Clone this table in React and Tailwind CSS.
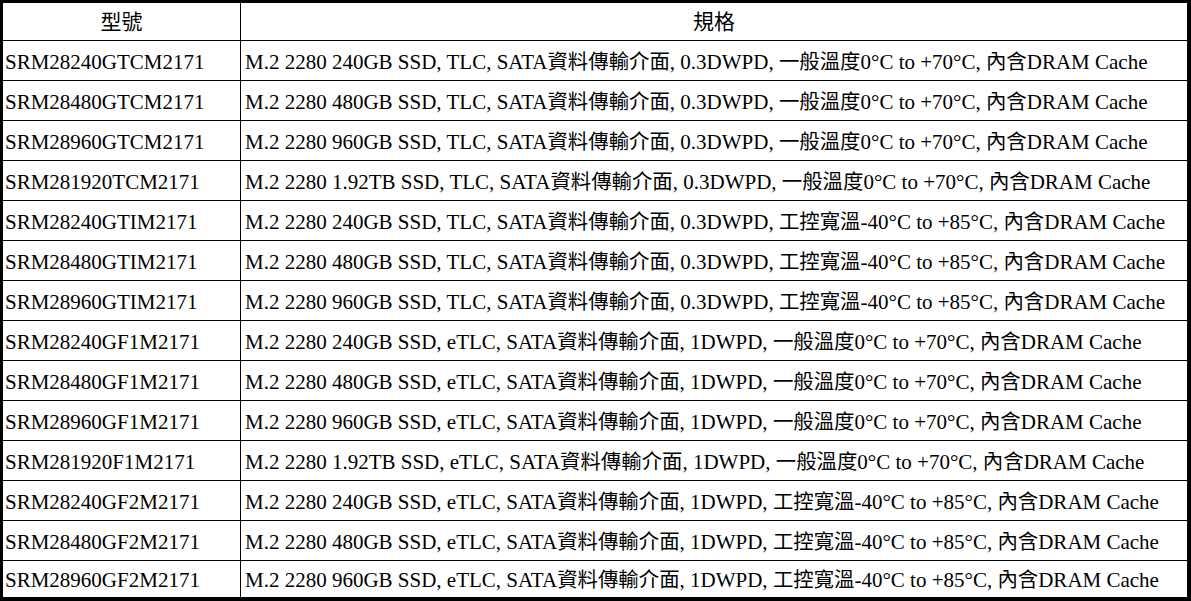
import React from "react";

const rows = [
  ["SRM28240GTCM2171", "M.2 2280 240GB SSD, TLC, SATA資料傳輸介面, 0.3DWPD, 一般溫度0°C to +70°C, 內含DRAM Cache"],
  ["SRM28480GTCM2171", "M.2 2280 480GB SSD, TLC, SATA資料傳輸介面, 0.3DWPD, 一般溫度0°C to +70°C, 內含DRAM Cache"],
  ["SRM28960GTCM2171", "M.2 2280 960GB SSD, TLC, SATA資料傳輸介面, 0.3DWPD, 一般溫度0°C to +70°C, 內含DRAM Cache"],
  ["SRM281920TCM2171", "M.2 2280 1.92TB SSD, TLC, SATA資料傳輸介面, 0.3DWPD, 一般溫度0°C to +70°C, 內含DRAM Cache"],
  ["SRM28240GTIM2171", "M.2 2280 240GB SSD, TLC, SATA資料傳輸介面, 0.3DWPD, 工控寬溫-40°C to +85°C, 內含DRAM Cache"],
  ["SRM28480GTIM2171", "M.2 2280 480GB SSD, TLC, SATA資料傳輸介面, 0.3DWPD, 工控寬溫-40°C to +85°C, 內含DRAM Cache"],
  ["SRM28960GTIM2171", "M.2 2280 960GB SSD, TLC, SATA資料傳輸介面, 0.3DWPD, 工控寬溫-40°C to +85°C, 內含DRAM Cache"],
  ["SRM28240GF1M2171", "M.2 2280 240GB SSD, eTLC, SATA資料傳輸介面, 1DWPD, 一般溫度0°C to +70°C, 內含DRAM Cache"],
  ["SRM28480GF1M2171", "M.2 2280 480GB SSD, eTLC, SATA資料傳輸介面, 1DWPD, 一般溫度0°C to +70°C, 內含DRAM Cache"],
  ["SRM28960GF1M2171", "M.2 2280 960GB SSD, eTLC, SATA資料傳輸介面, 1DWPD, 一般溫度0°C to +70°C, 內含DRAM Cache"],
  ["SRM281920F1M2171", "M.2 2280 1.92TB SSD, eTLC, SATA資料傳輸介面, 1DWPD, 一般溫度0°C to +70°C, 內含DRAM Cache"],
  ["SRM28240GF2M2171", "M.2 2280 240GB SSD, eTLC, SATA資料傳輸介面, 1DWPD, 工控寬溫-40°C to +85°C, 內含DRAM Cache"],
  ["SRM28480GF2M2171", "M.2 2280 480GB SSD, eTLC, SATA資料傳輸介面, 1DWPD, 工控寬溫-40°C to +85°C, 內含DRAM Cache"],
  ["SRM28960GF2M2171", "M.2 2280 960GB SSD, eTLC, SATA資料傳輸介面, 1DWPD, 工控寬溫-40°C to +85°C, 內含DRAM Cache"],
];

const font = {
  fontFamily: '"Liberation Serif", "Noto Sans CJK TC", serif',
};

// CJK runs are set a touch smaller so the line widths match the reference
const Spec = ({ text }) => (
  <span>
    {text.split(/([\u4e00-\u9fff]+)/).map((part, i) =>
      /[\u4e00-\u9fff]/.test(part) ? (
        <span key={i} className="text-[20.4px]">
          {part}
        </span>
      ) : (
        part
      )
    )}
  </span>
);

export default function App() {
  return (
    <div
      className="w-[1191px] h-[601px] bg-white text-black border-t-[3px] border-l-[3px] border-r-[4px] border-b-[4px] border-black flex flex-col text-[21px] leading-none whitespace-nowrap"
      style={font}
    >
      <div className="flex h-[38px] border-b border-black">
        <div className="w-[238px] border-r border-black flex items-center justify-center pt-[2px]">
          型號
        </div>
        <div className="flex-1 flex items-center justify-center pt-[2px]">規格</div>
      </div>
      {rows.map(([model, spec], i) => (
        <div
          key={model}
          className={`flex ${i === rows.length - 1 ? "h-[36px]" : "h-[40px] border-b border-black"}`}
        >
          <div className="w-[238px] border-r border-black flex items-center pl-[2px] pt-[3px]">
            {model}
          </div>
          <div className="flex-1 flex items-center pl-[4px] pt-[3px]">
            <Spec text={spec} />
          </div>
        </div>
      ))}
    </div>
  );
}
